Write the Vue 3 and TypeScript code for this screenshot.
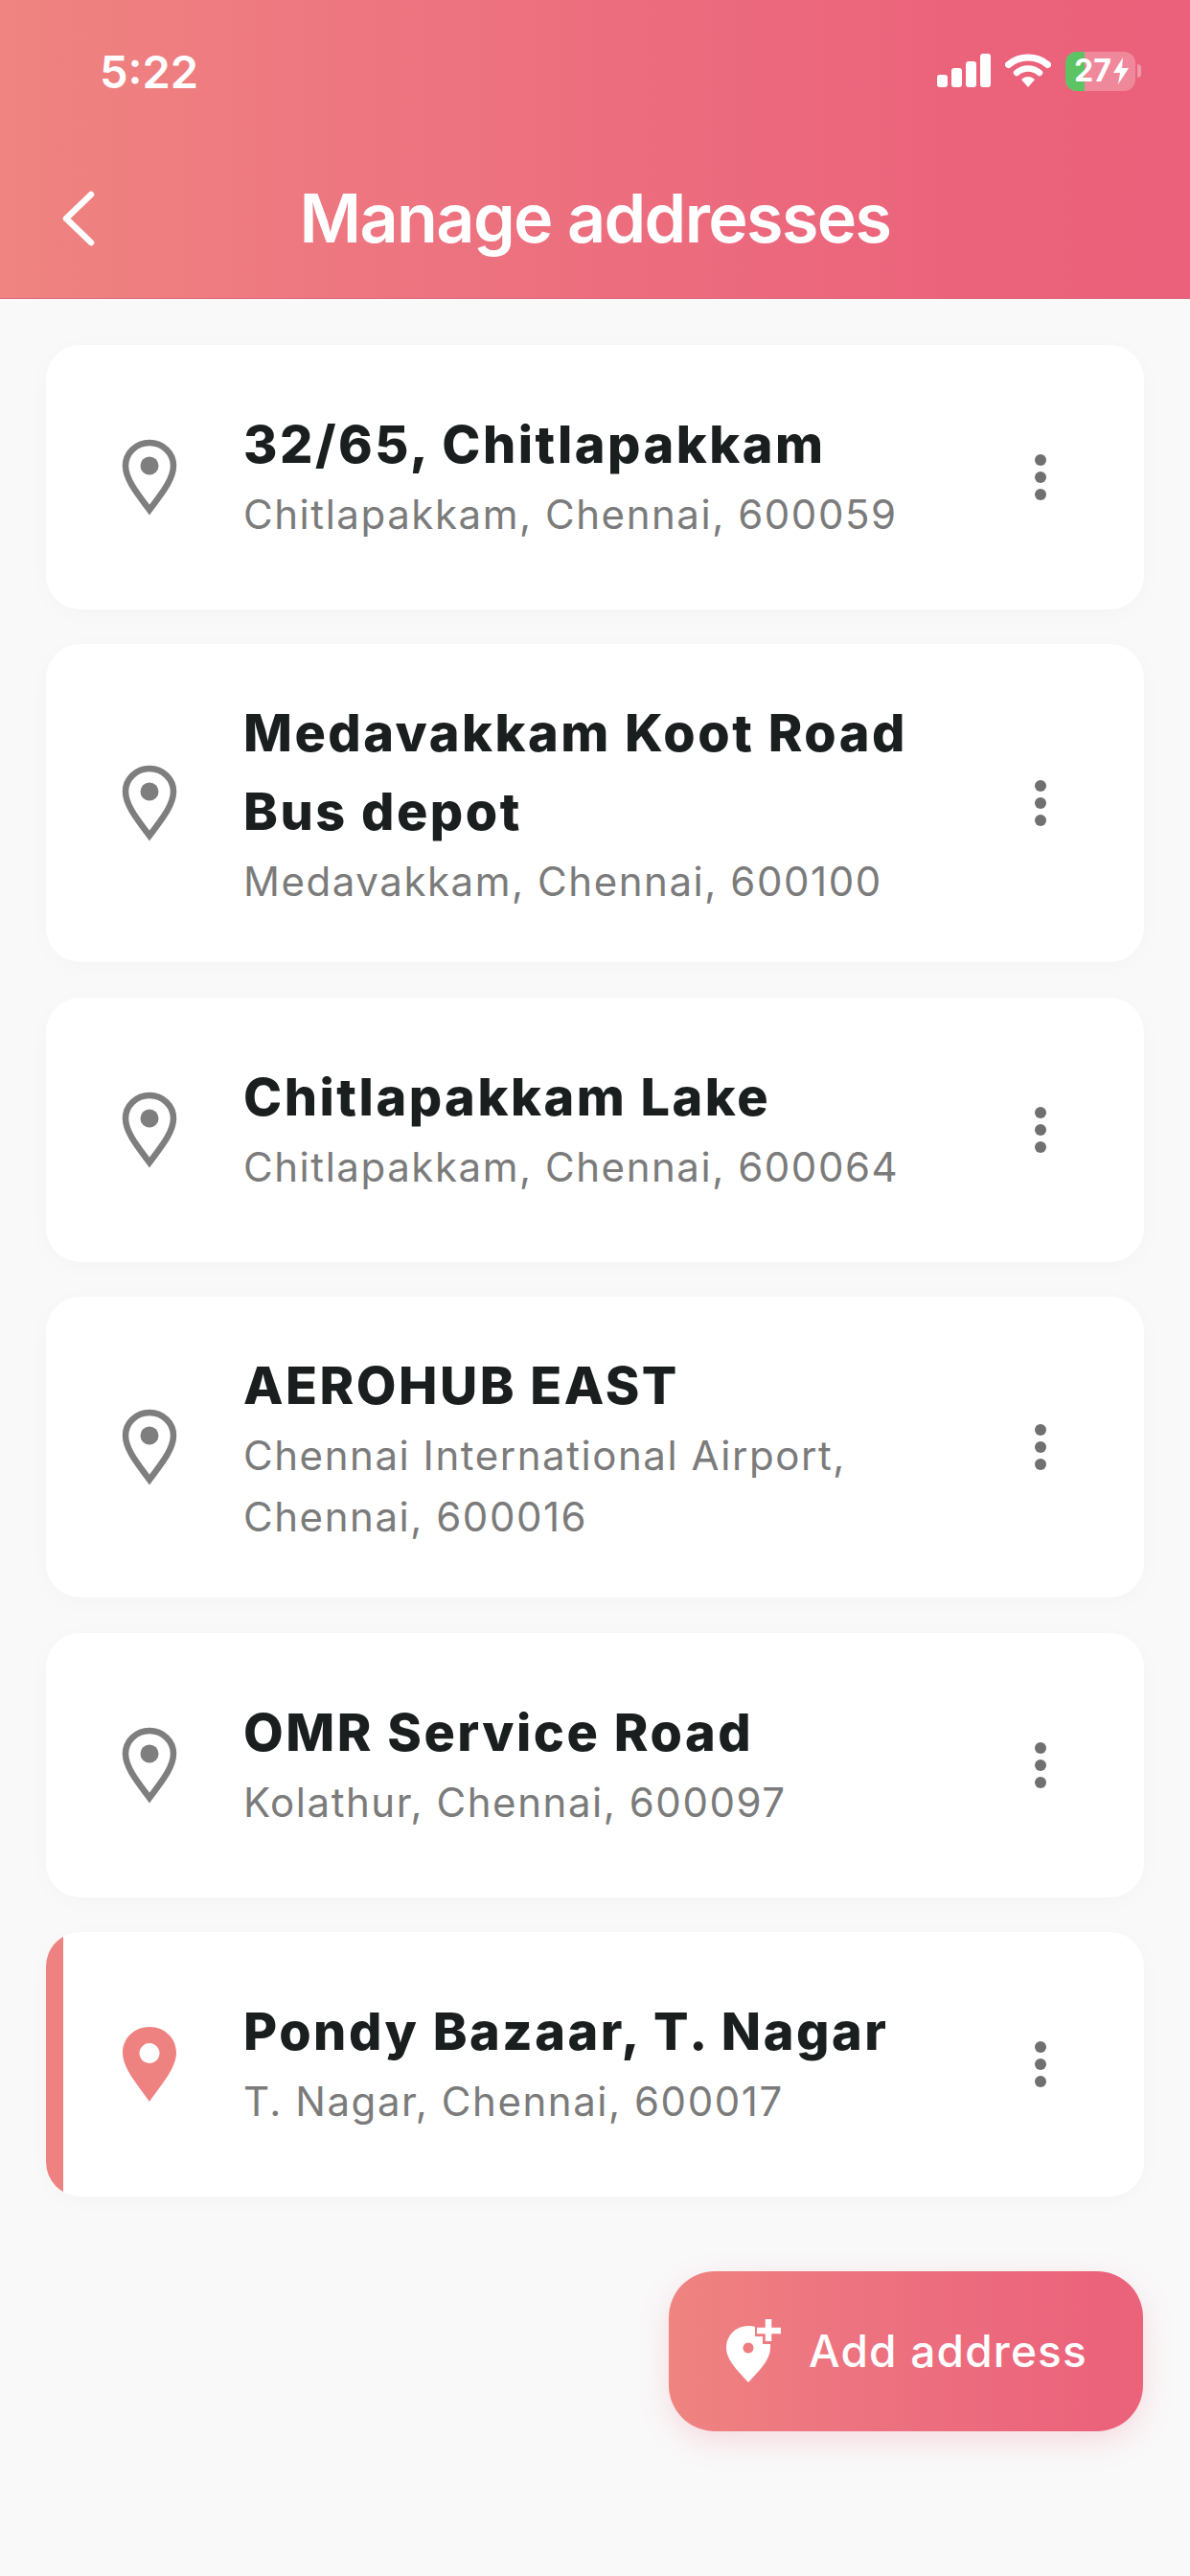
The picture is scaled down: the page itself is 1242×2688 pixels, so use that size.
<script setup lang="ts">
interface Address { title: string[]; sub: string[]; active?: boolean }
const addresses: Address[] = [
  { title: ['32/65, Chitlapakkam'], sub: ['Chitlapakkam, Chennai, 600059'] },
  { title: ['Medavakkam Koot Road', 'Bus depot'], sub: ['Medavakkam, Chennai, 600100'] },
  { title: ['Chitlapakkam Lake'], sub: ['Chitlapakkam, Chennai, 600064'] },
  { title: ['AEROHUB EAST'], sub: ['Chennai International Airport,', 'Chennai, 600016'] },
  { title: ['OMR Service Road'], sub: ['Kolathur, Chennai, 600097'] },
  { title: ['Pondy Bazaar, T. Nagar'], sub: ['T. Nagar, Chennai, 600017'], active: true },
]
const isCompact = (a: Address): boolean => a.title.length + a.sub.length === 2
</script>

<template>
  <div class="page">
    <header class="head">
      <div class="status">
        <span class="time">5:22</span>
        <div class="status-icons">
          <svg width="56" height="36" viewBox="0 0 56 36" class="signal">
            <rect x="0" y="22" width="11" height="13" rx="3" fill="#fff" />
            <rect x="15" y="15" width="11" height="20" rx="3" fill="#fff" />
            <rect x="30" y="8" width="11" height="27" rx="3" fill="#fff" />
            <rect x="45" y="0" width="11" height="35" rx="3" fill="#fff" />
          </svg>
          <svg width="48" height="36" viewBox="0 0 48 36" class="wifi">
            <path d="M3.500 11.500 C15 1.500 33 1.500 44.500 11.500" fill="none" stroke="#fff" stroke-width="7" stroke-linecap="round" />
            <path d="M12 20 C19 14 29 14 36 20" fill="none" stroke="#fff" stroke-width="6.500" stroke-linecap="round" />
            <path d="M17 27 C21 23 27 23 31 27 L24 35 Z" fill="#fff" />
          </svg>
          <div class="battery">
            <div class="battery-fill"></div>
            <span class="battery-num">27</span>
            <svg class="bolt" width="18" height="28" viewBox="0 0 18 28"><path d="M11 0 L1 16 H8 L6 28 L17 11 H10 Z" fill="#fff" /></svg>
          </div>
          <div class="battery-tip"></div>
        </div>
      </div>
      <div class="nav">
        <svg class="back" width="36" height="62" viewBox="0 0 36 62">
          <path d="M32 6 L6 31 L32 56" fill="none" stroke="#fff" stroke-width="6.500" stroke-linecap="round" stroke-linejoin="round" />
        </svg>
        <h1 class="title">Manage addresses</h1>
      </div>
    </header>

    <main class="list">
      <article v-for="a in addresses" :key="a.title[0]" class="card" :class="{ active: a.active, compact: isCompact(a) }">
        <svg class="pin" width="58" height="80" viewBox="0 0 58 80">
          <template v-if="a.active">
            <path fill-rule="evenodd" d="M29 1 C13 1 1 13 1 28 C1 44 17 62 29 79 C41 62 57 44 57 28 C57 13 45 1 29 1 Z M29 18 a10.500 10.500 0 1 0 0.010 0 Z" fill="#ee8280" />
          </template>
          <template v-else>
            <path d="M29 4 C15 4 4 15 4 28 C4 43 18 59 29 74 C40 59 54 43 54 28 C54 15 43 4 29 4 Z" fill="none" stroke="#7e7e7e" stroke-width="6.500" />
            <circle cx="29" cy="28" r="9.500" fill="#7e7e7e" />
          </template>
        </svg>
        <div class="text">
          <div v-for="t in a.title" :key="t" class="name">{{ t }}</div>
          <div v-for="s in a.sub" :key="s" class="sub">{{ s }}</div>
        </div>
        <div class="dots"><i></i><i></i><i></i></div>
      </article>
    </main>

    <div class="fab-row">
      <button class="fab" type="button">
        <svg width="58" height="66" viewBox="0 0 58 66" class="fab-icon">
          <path fill-rule="evenodd" d="M24 7 C11 7 1 17 1 30 C1 43 14 55 24 66 C34 55 47 43 47 30 L47 26 H39 V18 H31 V8 C29 7.300 27 7 24 7 Z M24 24.500 a5.500 5.500 0 1 0 0.010 0 Z" fill="#fff" />
          <path d="M45 0 V23 M33 12 H58" stroke="#fff" stroke-width="6.500" fill="none" />
        </svg>
        <span>Add address</span>
      </button>
    </div>
  </div>
</template>

<style>
body { margin: 0; background: #f9f9f9; }
</style>

<style scoped>
.page {
  width: 1242px;
  height: 2688px;
  background: #f9f9f9;
  font-family: Inter, "Liberation Sans", sans-serif;
  overflow: hidden;
}
.head {
  height: 312px;
  box-sizing: border-box;
  background: linear-gradient(90deg, #ef8480 0%, #ed7480 35%, #eb637b 80%, #eb607a 100%);
  border-bottom: 1px solid #e0687c;
  color: #fff;
}
.status {
  height: 136px;
  padding: 12px 51px 0 104px;
  display: flex;
  align-items: center;
  justify-content: space-between;
  box-sizing: border-box;
}
.time { font-size: 47px; font-weight: 600; letter-spacing: 0; }
.status-icons { display: flex; align-items: center; }
.signal { margin-right: 15px; }
.wifi { margin-right: 15px; }
.battery {
  position: relative;
  width: 73px;
  height: 41px;
  border-radius: 12px;
  background: rgba(255, 255, 255, 0.25);
  overflow: hidden;
  display: flex;
  align-items: center;
  padding-left: 9px;
  box-sizing: border-box;
}
.battery-fill { position: absolute; left: 0; top: 0; bottom: 0; width: 20px; background: #5cc463; }
.battery-num { position: relative; font-size: 32px; font-weight: 700; color: #fff; line-height: 1; }
.bolt { position: relative; margin-left: 1px; }
.battery-tip { width: 4px; height: 14px; margin-left: 2px; border-radius: 0 4px 4px 0; background: rgba(255, 255, 255, 0.35); }
.nav {
  position: relative;
  height: 175px;
  display: flex;
  align-items: center;
  justify-content: center;
}
.back { position: absolute; left: 63px; top: 61px; }
.title { margin: 8px 0 0; font-size: 70px; font-weight: 600; color: #fff; letter-spacing: -1.6px; }
.list {
  padding: 48px 48px 0;
  display: flex;
  flex-direction: column;
  gap: 36.4px;
}
.card {
  display: flex;
  align-items: center;
  min-height: 276px;
  box-sizing: border-box;
  padding: 52px 102px 52px 0;
  background: #fff;
  border-radius: 36px;
  box-shadow: 0 4px 24px rgba(0, 0, 0, 0.025);
  position: relative;
  overflow: hidden;
}
.card.compact .text { margin-bottom: 4px; }
.card.active::before {
  content: "";
  position: absolute;
  left: 0;
  top: 0;
  bottom: 0;
  width: 18px;
  background: #ee8280;
}
.pin { flex: none; margin-left: 79px; margin-right: 69px; }
.text { flex: 1; min-width: 0; }
.name {
  font-size: 54px;
  line-height: 82px;
  font-weight: 800;
  letter-spacing: 2.5px;
  color: #1a1e1f;
}
.sub {
  font-size: 42px;
  line-height: 64px;
  font-weight: 400;
  letter-spacing: 1.55px;
  color: #7b7b7b;
}
.dots { flex: none; display: flex; flex-direction: column; gap: 6px; }
.dots i { display: block; width: 12px; height: 12px; border-radius: 50%; background: #707070; }
.fab-row { display: flex; justify-content: flex-end; padding: 78px 49px 0; }
.fab {
  display: flex;
  align-items: center;
  gap: 29px;
  width: 495px;
  height: 167px;
  padding: 0 0 0 59px;
  box-sizing: border-box;
  border: none;
  border-radius: 48px;
  background: linear-gradient(90deg, #ef8480 0%, #ed7480 35%, #eb637b 90%);
  box-shadow: 0 10px 32px rgba(236, 98, 123, 0.2);
  color: #fff;
  font-family: inherit;
  font-size: 46px;
  font-weight: 500;
  letter-spacing: 1.2px;
}
</style>
